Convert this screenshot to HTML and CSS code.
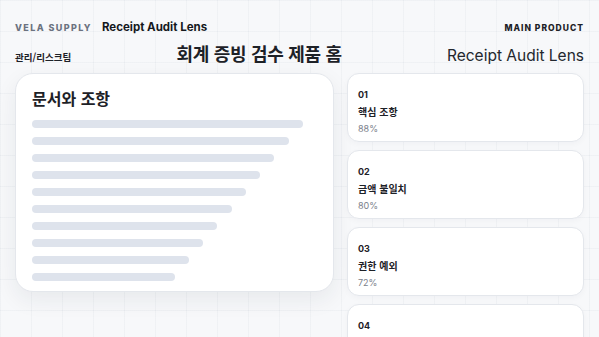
FILE: index.html
```html
<!DOCTYPE html>
<html lang="ko">
<head>
    <meta charset="UTF-8">
    <meta name="viewport" content="width=device-width, initial-scale=1.0">
    <title>Receipt Audit Lens</title>
    <link rel="stylesheet" href="styles.css">
</head>
<body>
    <div class="page">
        <header class="topbar">
            <div class="brand">
                <span class="brand-name">VELA SUPPLY</span>
                <span class="brand-product">Receipt Audit Lens</span>
            </div>
            <span class="eyebrow">MAIN PRODUCT</span>
        </header>

        <div class="titlebar">
            <span class="team">관리/리스크팀</span>
            <h1>회계 증빙 검수 제품 홈</h1>
            <span class="product-name">Receipt Audit Lens</span>
        </div>

        <main class="layout">
            <section class="doc-card">
                <h2>문서와 조항</h2>
                <div class="lines">
                    <div class="line" style="width: 95%"></div>
                    <div class="line" style="width: 90%"></div>
                    <div class="line" style="width: 85%"></div>
                    <div class="line" style="width: 80%"></div>
                    <div class="line" style="width: 75%"></div>
                    <div class="line" style="width: 70%"></div>
                    <div class="line" style="width: 65%"></div>
                    <div class="line" style="width: 60%"></div>
                    <div class="line" style="width: 55%"></div>
                    <div class="line" style="width: 50%"></div>
                </div>
            </section>

            <aside class="clause-list">
                <div class="clause">
                    <div class="clause-no">01</div>
                    <div class="clause-name">핵심 조항</div>
                    <div class="clause-score">88%</div>
                </div>
                <div class="clause">
                    <div class="clause-no">02</div>
                    <div class="clause-name">금액 불일치</div>
                    <div class="clause-score">80%</div>
                </div>
                <div class="clause">
                    <div class="clause-no">03</div>
                    <div class="clause-name">권한 예외</div>
                    <div class="clause-score">72%</div>
                </div>
                <div class="clause">
                    <div class="clause-no">04</div>
                </div>
            </aside>
        </main>
    </div>
</body>
</html>
```

FILE: styles.css
```css
/* Basic Reset */
* {
    margin: 0;
    padding: 0;
    box-sizing: border-box;
}

html, body {
    height: 100%;
    overflow: hidden;
}

body {
    font-family: 'Inter', 'Noto Sans CJK KR', sans-serif;
    color: #1d2127;
    background-color: #f7f8fa;
    background-image:
        linear-gradient(to right, rgba(148, 160, 184, 0.08) 1px, transparent 1px),
        linear-gradient(to bottom, rgba(148, 160, 184, 0.08) 1px, transparent 1px);
    background-size: 31px 31px;
}

.page {
    padding: 20px 15px 0;
}

/* Header */
.topbar {
    display: flex;
    justify-content: space-between;
    align-items: baseline;
    height: 16px;
}

.brand {
    display: flex;
    align-items: baseline;
    gap: 10px;
}

.brand-name {
    font-size: 9px;
    font-weight: 800;
    letter-spacing: 1.4px;
    color: #6b7280;
}

.brand-product {
    font-size: 11.5px;
    font-weight: 700;
    color: #15181d;
}

.eyebrow {
    font-size: 8.5px;
    font-weight: 800;
    letter-spacing: 1px;
    color: #1d2127;
}

.titlebar {
    display: flex;
    justify-content: space-between;
    align-items: baseline;
    margin-top: 4px;
    height: 33px;
}

.team {
    font-family: 'Noto Sans CJK KR', sans-serif;
    font-size: 9.5px;
    font-weight: 700;
}

h1 {
    font-family: 'Noto Sans CJK KR', sans-serif;
    font-size: 18px;
    font-weight: 700;
    letter-spacing: -0.3px;
    color: #1d2127;
}

.product-name {
    font-size: 15.5px;
    font-weight: 400;
    color: #23272e;
}

/* Main layout */
.layout {
    display: grid;
    grid-template-columns: 319px 1fr;
    gap: 13px;
    align-items: start;
}

.doc-card {
    background: #fff;
    border: 1px solid #e4e7ec;
    border-radius: 18px;
    padding: 12px 16px 6px;
    height: 219px;
    box-shadow: 0 8px 22px rgba(30, 41, 59, 0.07);
}

.doc-card h2 {
    font-family: 'Noto Sans CJK KR', sans-serif;
    font-size: 16px;
    font-weight: 700;
    line-height: 24px;
    margin-bottom: 10px;
}

.lines {
    display: flex;
    flex-direction: column;
    gap: 9px;
}

.line {
    height: 8px;
    border-radius: 4px;
    background: #dee3ec;
}

.clause-list {
    display: flex;
    flex-direction: column;
    gap: 8px;
}

.clause {
    background: #fff;
    border: 1px solid #e4e7ec;
    border-radius: 12px;
    height: 69px;
    padding: 14px 10px 0;
    box-shadow: 0 2px 6px rgba(30, 41, 59, 0.03);
}

.clause-no {
    font-size: 9px;
    font-weight: 700;
    line-height: 14px;
}

.clause-name {
    font-family: 'Noto Sans CJK KR', sans-serif;
    font-size: 10px;
    font-weight: 700;
    line-height: 17px;
    margin-top: 1px;
}

.clause-score {
    font-size: 9px;
    color: #7b818b;
    line-height: 15px;
    margin-top: 1px;
}
```
